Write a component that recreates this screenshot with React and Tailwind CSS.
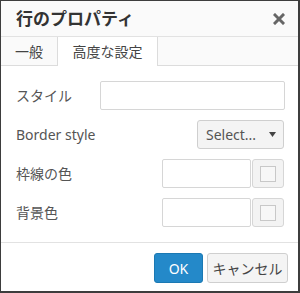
import React from 'react';

function ColorRow({ label }) {
  return (
    <div className="flex h-[29px] items-center">
      <span className="w-[161px] pl-[15px]">{label}</span>
      <input className="h-[29px] w-[89px] rounded-[2px] border border-[#d6d6d6] bg-white outline-none" />
      <button className="ml-[1px] flex h-[29px] w-[32px] items-center justify-center rounded-[3px] border border-[#d6d6d6] bg-[#f3f3f3]">
        <span className="block h-[16px] w-[16px] border border-[#c8c8c8] bg-[#f7f7f7]" />
      </button>
    </div>
  );
}

export default function App() {
  return (
    <div
      className="flex h-[293px] w-[300px] flex-col border-t border-l border-r-2 border-b-2 border-[#3d3d3d] bg-white text-[14px] text-[#555]"
      style={{ fontFamily: '"Noto Sans", "Noto Sans CJK JP", sans-serif' }}
    >
      <div className="flex h-[36px] shrink-0 items-center justify-between border-b border-[#e2e2e2] bg-[#fafafa] pl-[15px] pr-[13px]">
        <span className="text-[17px] font-bold text-[#333]">行のプロパティ</span>
        <svg width="12" height="12" viewBox="0 0 12 12" className="mt-[1px]">
          <path d="M2 2 L10 10 M10 2 L2 10" stroke="#666" strokeWidth="3" strokeLinecap="square" />
        </svg>
      </div>

      <div className="flex h-[29px] shrink-0 bg-white">
        <div className="flex w-[57px] items-center justify-center border-r border-b border-[#dcdcdc] bg-[#fafafa] text-[#444]">
          一般
        </div>
        <div className="flex w-[100px] items-center justify-center border-r border-[#dcdcdc] text-[#444]">
          高度な設定
        </div>
        <div className="flex-1 border-b border-[#dcdcdc] bg-[#fafafa]" />
      </div>

      <div className="flex flex-1 flex-col gap-[10px] pt-[15px]">
        <div className="flex h-[29px] items-center">
          <span className="w-[99px] pl-[15px]">スタイル</span>
          <input className="h-[29px] w-[185px] rounded-[2px] border border-[#d6d6d6] bg-white outline-none" />
        </div>
        <div className="flex h-[29px] items-center">
          <span className="w-[196px] pl-[15px]">Border style</span>
          <button className="flex h-[29px] w-[87px] items-center justify-between rounded-[3px] border border-[#cfcfcf] bg-[#f4f4f4] pl-[8px] pr-[7px] text-[#555]">
            <span>Select...</span>
            <svg width="7" height="5" viewBox="0 0 7 5">
              <path d="M0 0 L7 0 L3.5 5 Z" fill="#444" />
            </svg>
          </button>
        </div>
        <ColorRow label="枠線の色" />
        <ColorRow label="背景色" />
      </div>

      <div className="flex h-[49px] shrink-0 items-start justify-end gap-[4px] border-t border-[#e2e2e2] pt-[10px] pr-[10px]">
        <button className="h-[30px] w-[49px] rounded-[3px] border border-[#1b79b3] bg-[#2489c9] text-[14px] text-white">
          OK
        </button>
        <button className="h-[30px] w-[81px] rounded-[3px] border border-[#cfcfcf] bg-[#f4f4f4] text-[14px] text-[#444]">
          キャンセル
        </button>
      </div>
    </div>
  );
}
